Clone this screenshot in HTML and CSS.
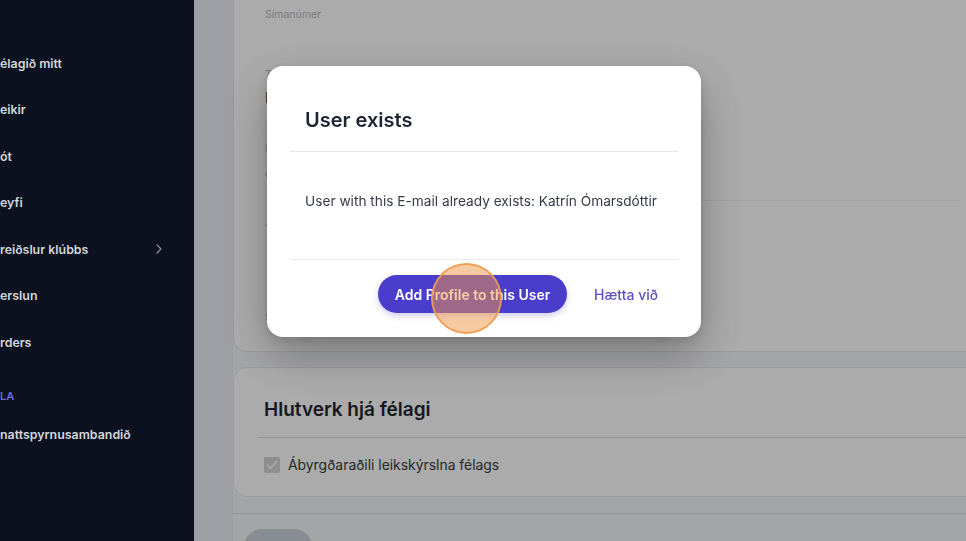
FILE: index.html
```html
<!DOCTYPE html>
<html lang="is">
<head>
<meta charset="utf-8">
<title>User exists</title>
<link rel="stylesheet" href="styles.css">
</head>
<body>
<div class="app">
  <aside class="sidebar">
    <nav class="nav">
      <a class="nav-item">élagið mitt</a>
      <a class="nav-item">eikir</a>
      <a class="nav-item">ót</a>
      <a class="nav-item">eyfi</a>
      <a class="nav-item">reiðslur klúbbs
        <svg class="chev" width="6" height="10" viewBox="0 0 6 10"><path d="M1 1l4 4-4 4" fill="none" stroke="#8b909b" stroke-width="1.3" stroke-linecap="round" stroke-linejoin="round"/></svg>
      </a>
      <a class="nav-item">erslun</a>
      <a class="nav-item">rders</a>
      <div class="nav-section">LA</div>
      <a class="nav-item">nattspyrnusambandið</a>
    </nav>
  </aside>
  <main class="main">
    <section class="card card-info">
      <div class="field-label">Símanúmer</div>
      <div class="field-label gap-l">Tegund</div>
      <div class="field-value">Leikmaður</div>
      <div class="field-label gap-m">Hlutverk</div>
      <div class="field-input">Velja</div>
      <div class="card-rule"></div>
      <div class="field-label gap-s">Athugasemd</div>
      <div class="field-label gap-xl">Staða</div>
    </section>
    <section class="card card-roles">
      <h2 class="card-title">Hlutverk hjá félagi</h2>
      <div class="card-divider"></div>
      <label class="check-row">
        <span class="checkbox"><svg width="12" height="10" viewBox="0 0 12 10"><path d="M1.5 5.2l3 3 6-6.5" fill="none" stroke="#fff" stroke-width="1.6" stroke-linecap="round" stroke-linejoin="round"/></svg></span>
        <span class="check-text">Ábyrgðaraðili leikskýrslna félags</span>
      </label>
    </section>
    <div class="page-rule"></div>
    <div class="page-actions"><span class="ghost-btn"></span></div>
  </main>
</div>
<div class="overlay"></div>
<div class="modal">
  <div class="modal-header"><h1 class="modal-title">User exists</h1></div>
  <div class="modal-body">User with this E-mail already exists: Katrín Ómarsdóttir</div>
  <div class="modal-footer">
    <button class="btn-primary">Add Profile to this User<span class="click-dot"></span></button>
    <button class="btn-link">Hætta við</button>
  </div>
</div>
</body>
</html>
```

FILE: styles.css
```css
* { box-sizing: border-box; }
html, body { margin: 0; padding: 0; height: 100%; }
body {
  font-family: Inter, "Open Sans", "Liberation Sans", sans-serif;
  overflow: hidden;
  background: #eef0f6;
}
.app { display: flex; height: 541px; }

.sidebar {
  width: 194px;
  flex: none;
  background: #0b111e;
  position: relative;
  z-index: 2;
  overflow: hidden;
}
.nav { display: flex; flex-direction: column; padding-top: 40px; }
.nav-item {
  height: 46.5px;
  display: flex;
  align-items: center;
  justify-content: space-between;
  padding-right: 32px;
  color: #d3d6dc;
  font-size: 12.4px;
  font-weight: 600;
  white-space: nowrap;
}
.nav-section {
  padding: 22px 0 8px;
  line-height: 16px;
  font-size: 11px;
  font-weight: 600;
  color: #6c67e0;
}

.main {
  flex: 1;
  display: flex;
  flex-direction: column;
  overflow: hidden;
  background: #f5f6f9;
  border-left: 39px solid #eceef7;
}
.card {
  background: #fff;
  border: 1px solid #e6e7ea;
  border-radius: 14px;
  margin-right: -24px;
  flex: none;
}
.card-info {
  margin-top: -30px;
  height: 382px;
  padding: 37px 28px 0 31px;
  display: flex;
  flex-direction: column;
}
.field-label { font-size: 10.5px; line-height: 14px; color: #b6b9c0; }
.field-value { font-size: 14px; line-height: 20px; color: #2a2f3a; margin-top: 6px; }
.field-input { font-size: 13px; line-height: 28px; color: #999; margin-top: 8px; width: 200px; }
.gap-l { margin-top: 46px; }
.gap-m { margin-top: 34px; }
.gap-s { margin-top: 16px; }
.gap-xl { margin-top: 80px; }
.card-rule { height: 1px; background: #efefef; margin: 8px 0 0 12px; }

.card-roles {
  margin-top: 15px;
  height: 130px;
  padding: 28px 0 0 0;
}
.card-title {
  margin: 0;
  padding-left: 30px;
  font-size: 19px;
  line-height: 28px;
  font-weight: 600;
  color: #1f2633;
}
.card-divider { height: 1px; background: #dcdfe4; margin: 13px 0 0 23px; }
.check-row {
  display: flex;
  align-items: center;
  gap: 8px;
  padding-left: 30px;
  margin-top: 17px;
  height: 20px;
}
.checkbox {
  width: 16px; height: 16px;
  border-radius: 2px;
  background: #d4d4d4;
  display: flex; align-items: center; justify-content: center;
}
.check-text { font-size: 13.9px; color: #3b3b3b; }

.page-rule { height: 1px; background: #d7dae2; margin-top: 16px; flex: none; }
.page-actions { padding: 15px 0 0 11px; }
.ghost-btn { display: block; width: 68px; height: 36px; border-radius: 18px; background: #cbd2dd; }

.overlay {
  position: fixed;
  left: 194px; top: 0; right: 0; bottom: 0;
  background: rgba(0, 0, 0, 0.33);
  z-index: 5;
}

.modal {
  position: fixed;
  top: 66px;
  left: 267px;
  width: 434px;
  height: 271px;
  background: #fff;
  border-radius: 16px;
  padding: 0 23px;
  z-index: 10;
  box-shadow: 0 18px 45px rgba(0, 0, 0, 0.28), 0 4px 12px rgba(0, 0, 0, 0.12);
}
.modal-header { padding: 40px 15px 17px; border-bottom: 1px solid #e4e6ea; }
.modal-title {
  margin: 0;
  font-size: 20px;
  line-height: 28px;
  font-weight: 600;
  color: #1e2533;
}
.modal-body {
  padding: 39px 15px 48px;
  font-size: 13.7px;
  line-height: 20px;
  color: #353b47;
  border-bottom: 1px solid #e9eaed;
  white-space: nowrap;
}
.modal-footer {
  display: flex;
  justify-content: flex-end;
  align-items: center;
  gap: 27px;
  padding: 15px 20px 0 0;
}
.btn-primary {
  position: relative;
  width: 189px;
  height: 38px;
  border: 0;
  border-radius: 19px;
  background: #4a3dcc;
  color: #fff;
  font-family: inherit;
  font-size: 14px;
  font-weight: 600;
  box-shadow: 0 3px 6px rgba(74, 61, 204, 0.25);
  padding: 0;
}
.click-dot {
  position: absolute;
  left: 53px;
  top: -12px;
  width: 71px;
  height: 71px;
  border-radius: 50%;
  background: rgba(242, 150, 70, 0.5);
  border: 2px solid rgba(240, 155, 80, 0.9);
}
.btn-link {
  border: 0;
  background: none;
  padding: 0;
  font-family: inherit;
  font-size: 14px;
  font-weight: 500;
  color: #5a4fc4;
}
```
